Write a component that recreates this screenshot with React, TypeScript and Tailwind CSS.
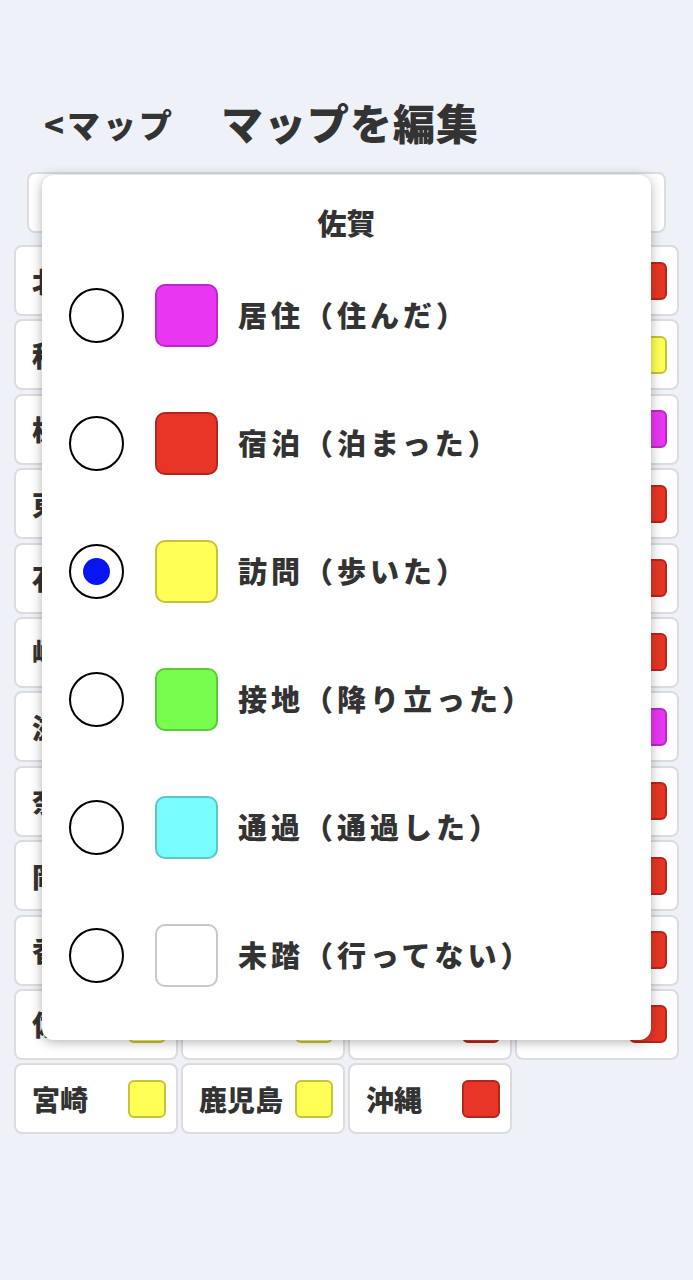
const prefs: [string, string][] = [
  ["北海道", "red"], ["青森", "yellow"], ["岩手", "yellow"], ["宮城", "red"],
  ["秋田", "yellow"], ["山形", "yellow"], ["福島", "yellow"], ["茨城", "yellow"],
  ["栃木", "yellow"], ["群馬", "yellow"], ["埼玉", "red"], ["千葉", "magenta"],
  ["東京", "magenta"], ["神奈川", "red"], ["新潟", "yellow"], ["富山", "red"],
  ["石川", "red"], ["福井", "yellow"], ["山梨", "red"], ["長野", "red"],
  ["岐阜", "yellow"], ["静岡", "red"], ["愛知", "red"], ["三重", "red"],
  ["滋賀", "yellow"], ["京都", "red"], ["大阪", "red"], ["兵庫", "magenta"],
  ["奈良", "yellow"], ["和歌山", "yellow"], ["鳥取", "yellow"], ["島根", "red"],
  ["岡山", "yellow"], ["広島", "red"], ["山口", "yellow"], ["徳島", "red"],
  ["香川", "yellow"], ["愛媛", "yellow"], ["高知", "yellow"], ["福岡", "red"],
  ["佐賀", "yellow"], ["長崎", "yellow"], ["熊本", "red"], ["大分", "red"],
  ["宮崎", "yellow"], ["鹿児島", "yellow"], ["沖縄", "red"],
];

const swatch: Record<string, string> = {
  magenta: "bg-[#e836f2] border-[#b92ac4]",
  red: "bg-[#e83526] border-[#b0281d]",
  yellow: "bg-[#ffff55] border-[#c4c43c]",
  green: "bg-[#78fc4e] border-[#5cc93a]",
  cyan: "bg-[#78fcfc] border-[#5cc6cc]",
  white: "bg-white border-[#c8c8c8]",
};

const options = [
  { color: "magenta", label: "居住（住んだ）" },
  { color: "red", label: "宿泊（泊まった）" },
  { color: "yellow", label: "訪問（歩いた）" },
  { color: "green", label: "接地（降り立った）" },
  { color: "cyan", label: "通過（通過した）" },
  { color: "white", label: "未踏（行ってない）" },
];

const font = { fontFamily: '"Noto Sans CJK JP", "Noto Sans", sans-serif' };

export default function App() {
  return (
    <div lang="ja" className="relative h-[1280px] w-[693px] overflow-hidden bg-[#eef1f7] text-[#333]" style={font}>
      <div className="flex items-center h-[172px] pt-[72px] pl-[44px]">
        <span className="text-[33px] font-black leading-none tracking-[3px] mt-[4px]">&lt;マップ</span>
        <span className="ml-[46px] text-[42px] font-black leading-none tracking-[1px]">マップを編集</span>
      </div>
      <div className="mx-[27px] h-[61px] rounded-[8px] border-2 border-[#dcdcdc] bg-white"></div>
      <div className="grid grid-cols-4 gap-x-[3px] gap-y-[3.4px] px-[14px] mt-[12px]">
        {prefs.map(([name, c]) => (
          <div key={name} className="flex h-[71px] items-center justify-between rounded-[8px] border-2 border-[#dcdcdc] bg-white pl-[16px] pr-[10px]">
            <span className="text-[28px] font-black leading-none">{name}</span>
            <span className={`h-[38px] w-[38px] shrink-0 rounded-[6px] border-2 ${swatch[c]}`}></span>
          </div>
        ))}
      </div>

      <div className="absolute left-[42px] top-[175px] h-[865px] w-[609px] rounded-[12px] bg-white shadow-[0_2px_12px_rgba(0,0,0,0.3)]">
        <div className="pt-[28px] text-center text-[29px] font-black leading-[38px]">佐賀</div>
        <div className="mt-[10px] flex flex-col">
          {options.map((o, i) => (
            <div key={o.label} className="flex h-[128px] items-center">
              <span className="ml-[27px] flex h-[55px] w-[55px] items-center justify-center rounded-full border-2 border-black">
                {i === 2 && <span className="h-[27px] w-[27px] rounded-full bg-[#0a14f0]"></span>}
              </span>
              <span className={`ml-[31px] h-[63px] w-[63px] rounded-[10px] border-2 ${swatch[o.color]}`}></span>
              <span className="ml-[20px] text-[29px] font-black tracking-[4px]">{o.label}</span>
            </div>
          ))}
        </div>
      </div>
    </div>
  );
}
